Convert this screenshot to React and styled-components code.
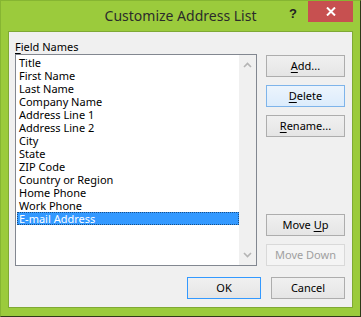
import styled, { createGlobalStyle } from "styled-components";

const GlobalStyle = createGlobalStyle`
    html, body {
        margin: 0;
        padding: 0;
        background: #ffffff;
    }
    * {
        box-sizing: border-box;
    }
`;

const fields = [
    'Title',
    'First Name',
    'Last Name',
    'Company Name',
    'Address Line 1',
    'Address Line 2',
    'City',
    'State',
    'ZIP Code',
    'Country or Region',
    'Home Phone',
    'Work Phone',
    'E-mail Address',
];

function Chevron({ up }) {
    return (
        <svg width="9" height="6" viewBox="0 0 9 6">
            <path
                d={up ? 'M1 5 L4.5 1.5 L8 5' : 'M1 1 L4.5 4.5 L8 1'}
                fill="none"
                stroke="#b4b4b4"
                strokeWidth="1.6"
            />
        </svg>
    );
}

export default function App() {
    return (
        <>
            <GlobalStyle />
            <Window>
                <TitleBar>
                    <Title>Customize Address List</Title>
                    <Help>?</Help>
                    <Close>
                        <svg width="10" height="9" viewBox="0 0 10 9">
                            <path d="M1 0.5 L9 8.5 M9 0.5 L1 8.5" stroke="#ffffff" strokeWidth="2" />
                        </svg>
                    </Close>
                </TitleBar>
                <Client>
                    <Label><u>F</u>ield Names</Label>
                    <Body>
                        <ListBox>
                            <Items>
                                {fields.map((name, i) => (
                                    <Item key={name} selected={i === fields.length - 1}>{name}</Item>
                                ))}
                            </Items>
                            <ScrollTrack>
                                <Chevron up />
                                <Chevron />
                            </ScrollTrack>
                        </ListBox>
                        <Side>
                            <Button><u>A</u>dd...</Button>
                            <Button hover><u>D</u>elete</Button>
                            <Button><u>R</u>ename...</Button>
                            <Spacer />
                            <Button>Move <u>U</u>p</Button>
                            <Button disabled>Move Down</Button>
                        </Side>
                    </Body>
                    <Footer>
                        <Button wide primary>OK</Button>
                        <Button wide>Cancel</Button>
                    </Footer>
                </Client>
            </Window>
        </>
    );
}

const Window = styled.div`
    width: 361px;
    height: 317px;
    background: #9bcb3c;
    border-top: 1px solid #86b532;
    border-left: 1px solid #86b532;
    border-right: 1px solid #2e3a1a;
    border-bottom: 1px solid #2e3a1a;
    display: flex;
    flex-direction: column;
    font-family: "Noto Sans", "Open Sans", sans-serif;
    font-size: 11px;
    color: #000000;
`;

const TitleBar = styled.div`
    height: 30px;
    position: relative;
    display: flex;
    align-items: flex-start;
    justify-content: flex-end;
    padding-right: 7px;
`;

const Title = styled.div`
    position: absolute;
    left: 0;
    right: 0;
    top: 5px;
    text-align: center;
    font-size: 14px;
    line-height: 20px;
    color: #2b2b2b;
`;

const Help = styled.div`
    margin-top: 6px;
    margin-right: 11px;
    font-family: "Liberation Sans", sans-serif;
    font-weight: bold;
    font-size: 13px;
    line-height: 14px;
    color: #222222;
`;

const Close = styled.div`
    width: 45px;
    height: 21px;
    background: #c75050;
    display: flex;
    align-items: center;
    justify-content: center;
`;

const Client = styled.div`
    flex: 1;
    margin: 0 7px 8px 7px;
    background: #f0f0f0;
    border: 1px solid #7fa934;
    padding: 7px 7px 6px 6px;
    display: flex;
    flex-direction: column;
`;

const Label = styled.div`
    height: 15px;
    line-height: 15px;

    u {
        text-decoration-thickness: 1px;
        text-underline-offset: 2px;
    }
`;

const Body = styled.div`
    display: flex;
    gap: 9px;
`;

const ListBox = styled.div`
    width: 242px;
    height: 212px;
    border: 1px solid #828790;
    background: #ffffff;
    display: flex;
`;

const Items = styled.div`
    flex: 1;
    padding: 1px 0 0 1px;
`;

const Item = styled.div`
    height: 13px;
    line-height: 14px;
    padding-left: 2px;
    white-space: nowrap;
    background: ${p => (p.selected ? '#3399ff' : 'transparent')};
    color: ${p => (p.selected ? '#ffffff' : '#000000')};
    outline: ${p => (p.selected ? '1px dotted #1a4f86' : 'none')};
    outline-offset: -1px;
`;

const ScrollTrack = styled.div`
    width: 17px;
    background: #f0f0f0;
    display: flex;
    flex-direction: column;
    justify-content: space-between;
    align-items: center;
    padding: 7px 0 7px 0;
`;

const Side = styled.div`
    width: 79px;
    display: flex;
    flex-direction: column;
    gap: 8px;
    padding-top: 1px;
`;

const Spacer = styled.div`
    flex: 1;
`;

const Button = styled.div`
    width: ${p => (p.wide ? '74px' : '79px')};
    height: 22px;
    line-height: 20px;
    text-align: center;
    white-space: nowrap;
    border: 1px solid ${p => (p.disabled ? '#d9d9d9' : p.hover ? '#7eb4ea' : p.primary ? '#3399ff' : '#adadad')};
    background: ${p => (p.disabled ? '#f4f4f4' : p.hover ? 'linear-gradient(#ecf4fc, #dcecfc)' : 'linear-gradient(#f0f0f0, #e5e5e5)')};
    color: ${p => (p.disabled ? '#a0a0a0' : '#000000')};

    u {
        text-decoration-thickness: 1px;
        text-underline-offset: 2px;
    }
`;

const Footer = styled.div`
    margin-top: 11px;
    display: flex;
    justify-content: flex-end;
    gap: 10px;
`;
